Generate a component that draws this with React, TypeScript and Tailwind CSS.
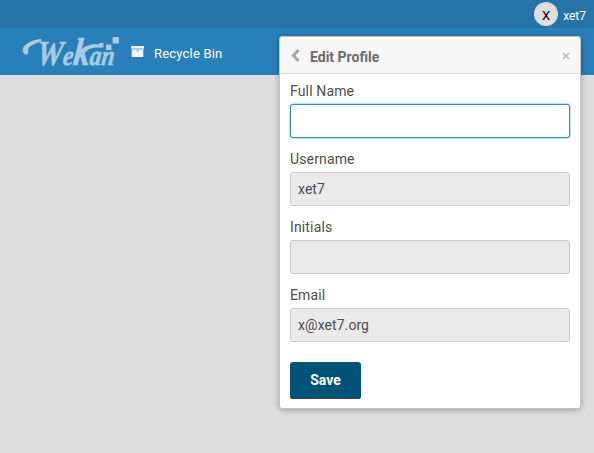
import React from "react";

function WekanLogo() {
  return (
    <svg width="100" height="46" viewBox="0 -7 100 46" className="shrink-0" fill="#a9cce5" role="img" aria-label="Wekan">
      {/* leading swash */}
      <path d="M2 17.500C-3 12 6 4.500 18 3C20 3 19.500 5.500 18.500 6C10 8 4 12 6.500 16C6.500 18.500 3.500 19.500 2 17.500Z" />
      {/* long arm reaching over the last letters */}
      <path d="M55 18C61 9.500 69 7.500 79 8.500L79 11.500C70 11 63 13 57 19.500Z" />
      <g transform="translate(14 28.500) skewX(-6) scale(.84 1)">
        <text fontFamily="'Liberation Serif', serif" fontStyle="italic" fontWeight="700" fontSize="35" stroke="#a9cce5" strokeWidth=".5">
          W<tspan fontSize="28">e</tspan>
          <tspan fontSize="39">k</tspan>
          <tspan fontSize="28">an</tspan>
        </text>
      </g>
      <rect x="77" y="7" width="4.500" height="4.500" rx=".5" />
      <rect x="84" y="8.500" width="5.500" height="5.500" rx=".5" />
      <rect x="90.500" y="1" width="6.500" height="6.500" rx=".7" />
    </svg>
  );
}

function ArchiveIcon() {
  return (
    <svg width="13" height="12" viewBox="0 0 13 12" className="ml-[9px] mt-[1px] shrink-0">
      <path d="M0 0H13V2.500H0Z" fill="#f4f6f8" />
      <path d="M0 2.500H13V3.500H0Z" fill="#bcd6e8" />
      <path d="M.7 3.500H12.300V11H.7Z" fill="#f4f6f8" />
      <path d="M5 4.700H8" stroke="#8fbcdc" strokeWidth="1" />
    </svg>
  );
}

function Field({ label, value = "", active = false }: { label: string; value?: string; active?: boolean }) {
  return (
    <label className="mb-[10px] block">
      <span className="mb-[3px] block h-[21px] pt-px leading-5 tracking-[0.01em]">{label}</span>
      <input
        readOnly
        value={value}
        className={
          "block h-[34px] w-full rounded-[3px] border px-[7px] tracking-[0.005em] outline-none " +
          (active ? "border-[#298fca] bg-white shadow-[0_0_2px_#298fca]" : "border-[#c9c9c9] bg-[#eaeaea]")
        }
      />
    </label>
  );
}

export default function App() {
  return (
    <div className="relative h-[453px] w-[594px] overflow-hidden bg-[#dedede] font-['Roboto','Liberation_Sans',sans-serif] text-[14px] text-[#4d4d4d]">
      <div className="flex h-7 items-center justify-end bg-[#2573a7] pr-2 text-white">
        <span className="flex size-6 items-center justify-center rounded-full bg-[#dedede] pt-[2px] text-[13px] leading-none text-black">
          X
        </span>
        <span className="ml-[5px] pt-[3px] text-[12px] leading-4">xet7</span>
      </div>
      <header className="flex h-[47px] items-center bg-[#2980b9] pl-[22px] text-[13px] text-white">
        <WekanLogo />
        <ArchiveIcon />
        <span className="ml-[10px] mt-[5px] leading-5 tracking-[0.015em]">Recycle Bin</span>
      </header>

      <section className="absolute left-[279px] top-9 h-[373px] w-[302px] rounded-[3px] border border-[#c4c4c4] bg-white shadow-[0_1px_6px_rgba(0,0,0,0.3)]">
        <div className="flex h-[37px] items-center rounded-t-[2px] border-b border-[#dcdcdc] bg-[#f7f7f7] pl-[11px] pr-[10px]">
          <svg width="9" height="13" viewBox="0 0 9 13" className="mt-[1px]">
            <path d="M7.500 1L2.500 6.500L7.500 12" fill="none" stroke="#a6a6a6" strokeWidth="3" />
          </svg>
          <h1 className="ml-[10px] mt-[3px] font-bold leading-5 text-[#6b6b6b]">Edit Profile</h1>
          <svg width="8" height="8" viewBox="0 0 8 8" className="ml-auto mt-[2px]">
            <path d="M1 1L7 7M7 1L1 7" stroke="#adadad" strokeWidth="1.100" />
          </svg>
        </div>
        <form className="px-[10px] pt-[6px]">
          <Field label="Full Name" active />
          <Field label="Username" value="xet7" />
          <Field label="Initials" />
          <Field label="Email" value="x@xet7.org" />
          <button
            type="button"
            className="mt-[10px] h-[37px] w-[71px] rounded-[3px] bg-[#005377] font-bold text-white shadow-[inset_0_-1px_0_#30414a]"
          >
            Save
          </button>
        </form>
      </section>
    </div>
  );
}
